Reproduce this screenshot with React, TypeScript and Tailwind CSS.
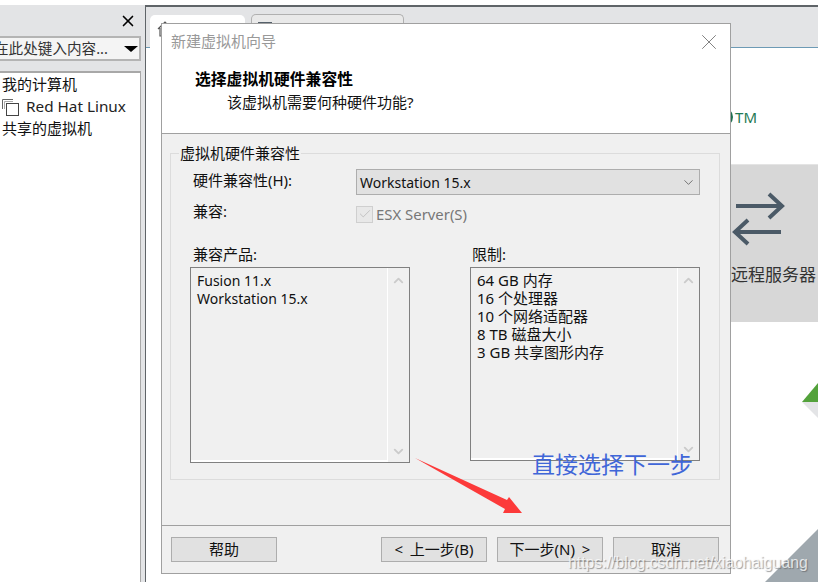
import { Check, ChevronDown, ChevronUp, X } from "lucide-react";

const font = "font-['Noto_Sans','Noto_Sans_CJK_SC',sans-serif]";

function Btn({ label }: { label: string }) {
  return (
    <button className="w-[106px] h-[25px] border border-[#adadad] bg-[#e1e1e1] pb-[2px] text-[15px] leading-[20px] text-[#111] [word-spacing:3px]">
      {label}
    </button>
  );
}

function ListBox({ lines, className, textClass }: { lines: string[]; className: string; textClass: string }) {
  return (
    <div className={`${className} flex border border-[#808080] bg-[#f0f0f0]`}>
      <div className={`flex-1 border-b-2 border-white pl-[6px] leading-[18px] text-[#111] ${textClass}`}>
        {lines.map((l) => (
          <div key={l} className="whitespace-pre">{l}</div>
        ))}
      </div>
      <div className="w-[22px] border-l border-white flex flex-col justify-between items-center pt-[5px] pb-[3px]">
        <ChevronUp size={15} strokeWidth={3} className="text-[#cbcbcb]" />
        <ChevronDown size={15} strokeWidth={3} className="text-[#cbcbcb]" />
      </div>
    </div>
  );
}

function Dialog() {
  return (
    <div className="absolute left-[161px] top-[23px] w-[570px] h-[551px] border border-[#a0a0a0] bg-[#f0f0f0] flex flex-col">
      <div className="h-[110px] bg-white border-b border-[#a0a0a0] shrink-0">
        <div className="flex items-center justify-between h-[36px] pl-[9px] pr-[8px]">
          <span className="pb-[2px] text-[15px] text-[#999]">新建虚拟机向导</span>
          <X size={26} strokeWidth={0.9} className="text-[#808080]" />
        </div>
        <div className="pl-[33px] pt-[7px] text-[15.8px] leading-[24px] font-bold text-black">选择虚拟机硬件兼容性</div>
        <div className="pl-[65px] text-[15px] leading-[23px] text-[#111]">该虚拟机需要何种硬件功能?</div>
      </div>

      <div className="flex-1 pl-[8px] pr-[10px] pt-[9px]">
        <fieldset className="h-[337px] border border-[#dcdcdc]">
          <legend className="ml-[8px] px-[1px] text-[15px] leading-[20px] text-[#111]">虚拟机硬件兼容性</legend>
          <div className="px-[19px]">
            <div className="flex items-center h-[26px] mt-[6px]">
              <span className="w-[166px] pl-[3px] pb-[3px] text-[15px] text-[#111]">硬件兼容性(H):</span>
              <div className="flex-1 h-[26px] border border-[#adadad] bg-[#e1e1e1] flex items-center justify-between pl-[3px] pr-[3px] text-[14px] text-[#111]">
                <span className="pt-[1px]">Workstation 15.x</span>
                <ChevronDown size={15} strokeWidth={1} className="text-[#333]" />
              </div>
            </div>
            <div className="flex items-center h-[18px] mt-[10px]">
              <span className="w-[166px] pl-[3px] pb-[5px] text-[15px] text-[#111]">兼容:</span>
              <div className="w-[17px] h-[17px] border border-[#cfcfcf] bg-[#e8e8e8] flex items-center justify-center">
                <Check size={14} strokeWidth={1.5} className="text-[#bdbdbd]" />
              </div>
              <span className="ml-[3px] text-[14.9px] text-[#777]">ESX Server(S)</span>
            </div>
            <div className="flex justify-between mt-[20px]">
              <div className="flex flex-col">
                <span className="pl-[3px] pt-[1px] h-[24px] text-[15px] leading-[20px] text-[#111]">兼容产品:</span>
                <ListBox lines={["Fusion 11.x", "Workstation 15.x"]} className="w-[220px] h-[196px]" textClass="pt-[4px] text-[14px]" />
              </div>
              <div className="flex flex-col">
                <span className="pl-[2px] pt-[1px] h-[24px] text-[15px] leading-[20px] text-[#111]">限制:</span>
                <ListBox
                  lines={["64 GB 内存", "16 个处理器", "10 个网络适配器", "8 TB 磁盘大小", "3 GB 共享图形内存"]}
                  className="w-[230px] h-[194px]"
                  textClass="pt-[3px] text-[15px]"
                />
              </div>
            </div>
          </div>
        </fieldset>
      </div>

      <div className="h-[48px] shrink-0 border-t border-[#a0a0a0] flex items-start pt-[11px] pl-[9px] pr-[11px]">
        <Btn label="帮助" />
        <div className="ml-auto flex gap-[10px]">
          <Btn label="< 上一步(B)" />
          <Btn label="下一步(N) >" />
          <Btn label="取消" />
        </div>
      </div>
    </div>
  );
}

export default function App() {
  return (
    <div className={`relative w-[818px] h-[582px] overflow-hidden bg-white flex flex-col ${font}`}>
      <div className="h-[5px] shrink-0 bg-white" />
      <div className="flex flex-1 min-h-0">
        {/* sidebar */}
        <aside className="w-[145px] shrink-0 bg-[#e3e4e6] flex flex-col pr-[4px]">
          <div className="h-[31px] flex items-center justify-end pr-[4px] pt-[1px]">
            <X size={18} strokeWidth={2.2} className="text-black" />
          </div>
          <div className="h-[25px] border-y-2 border-r-2 border-[#b4b4b4] bg-[#f4f4f4] flex items-center overflow-hidden">
            <span className="-ml-[6px] text-[14.6px] text-[#333] whitespace-nowrap">在此处键入内容...</span>
            <span className="ml-auto mr-[1px] w-0 h-0 border-x-[7px] border-x-transparent border-t-[6px] border-t-black" />
          </div>
          <div className="h-[10px]" />
          <div className="flex-1 bg-white border-t-2 border-r border-[#a8a8a8] pl-[2px] text-[15px] leading-[22px] text-[#111]">
            <div>我的计算机</div>
            <div className="flex items-center gap-[5px]">
              <svg width="19" height="19" viewBox="0 0 19 19" fill="none" stroke="#666" strokeWidth="1">
                <path d="M0.5 12V2.5H11" />
                <path d="M2.5 12V4.5H11" stroke="#aaa" />
                <rect x="4.5" y="6.5" width="12" height="12" stroke="#444" />
              </svg>
              <span className="text-[15.3px] text-[#222]">Red Hat Linux</span>
            </div>
            <div>共享的虚拟机</div>
          </div>
        </aside>

        {/* main area */}
        <main className="flex-1 min-w-0 flex flex-col border-t-2 border-l border-[#5f6468]">
          <div className="h-[41px] shrink-0 bg-[#e3e4e6] border-b border-[#6d9ab5] flex items-end pl-[4px] gap-[6px]">
            <div className="w-[95px] h-[33px] bg-white rounded-t-[5px] -mb-px flex items-start pl-[7px] pt-[6px] gap-[16px]">
              <svg width="16" height="16" viewBox="0 0 16 16" fill="none" stroke="#555" strokeWidth="1.2">
                <path d="M1 8L8 1l7 7M3 7v8h10V7" />
              </svg>
              <span className="text-[14px] text-[#333]">主页</span>
            </div>
            <div className="w-[153px] h-[33px] bg-[#e9e9e9] rounded-t-[5px] border-x border-t border-[#b0b0b0] pl-[6px] pt-[7px]">
              <div className="w-[14px] h-[14px] border-2 border-[#55606a] bg-[#b9c0c6]" />
            </div>
          </div>
          <div className="flex-1 flex flex-col items-end">
            <div className="h-[62px] pr-[61px] pt-[60px] flex items-start gap-[2px] text-[15px] leading-[18px] text-[#1f7a56]">
              <svg width="20" height="20" viewBox="0 0 20 20" className="-mt-[1px]">
                <circle cx="10" cy="10" r="10" fill="#1f6f50" />
              </svg>
              <span>TM</span>
            </div>
            <div className="mt-[54px] w-[120px] h-[158px] bg-[#d7d7d7] border-t border-[#e4e4e4] flex flex-col items-end">
              <svg width="88" height="60" viewBox="0 0 88 60" fill="none" stroke="#4b5a67" strokeWidth="4" className="mt-[27px]">
                <path d="M6 14H51M39 2l13 12-13 12M51 40H6M18 28L5 40l13 12" />
              </svg>
              <span className="w-[87px] mt-[11px] text-[17px] leading-[24px] text-[#333] whitespace-nowrap">远程服务器</span>
            </div>
          </div>
        </main>
      </div>

      {/* decorative corner triangles */}
      <svg className="absolute left-[760px] top-[380px]" width="58" height="202" viewBox="0 0 58 202">
        <polygon points="42,22 58,3 58,22" fill="#53a23b" />
        <polygon points="42,22 58,22 58,38" fill="#e3e4e6" />
        <polygon points="5,202 58,149 58,202" fill="#9fa8ae" />
      </svg>

      <Dialog />

      {/* annotations over the screenshot */}
      <svg className="absolute left-[410px] top-[450px]" width="120" height="70" viewBox="0 0 120 70">
        <polygon points="5,8 97,50 99,47 112,63 93,63 95,59" fill="#fc3a3a" />
      </svg>
      <div className="absolute left-[532px] top-[449px] text-[23px] leading-[30px] text-[#3f66d8] whitespace-nowrap">直接选择下一步</div>
      <div className="absolute left-[568px] top-[553px] font-['Liberation_Sans',sans-serif] text-[15.8px] leading-[20px] text-white/75 [text-shadow:1px_1px_1px_rgba(90,90,90,0.6)] whitespace-nowrap">
        https://blog.csdn.net/xiaohaiguang
      </div>
    </div>
  );
}
